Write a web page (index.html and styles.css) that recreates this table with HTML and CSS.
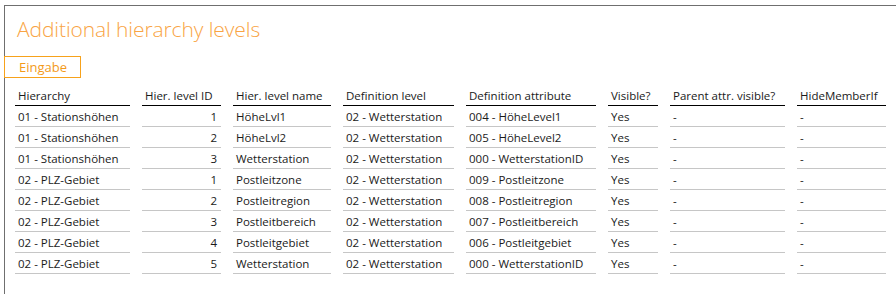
FILE: index.html
```html
<!DOCTYPE html>
<html>
<head>
<meta charset="utf-8">
<link rel="stylesheet" href="styles.css">
</head>
<body>
<div class="panel">
  <h1 class="title">Additional hierarchy levels</h1>
  <div class="tabs"><span class="tab">Eingabe</span></div>
  <div class="grid">
    <div class="th">Hierarchy</div><div class="th">Hier. level ID</div><div class="th">Hier. level name</div><div class="th">Definition level</div><div class="th">Definition attribute</div><div class="th">Visible?</div><div class="th">Parent attr. visible?</div><div class="th">HideMemberIf</div>

    <div class="td">01 - Stationshöhen</div><div class="td num">1</div><div class="td">HöheLvl1</div><div class="td">02 - Wetterstation</div><div class="td">004 - HöheLevel1</div><div class="td">Yes</div><div class="td">-</div><div class="td">-</div>
    <div class="td">01 - Stationshöhen</div><div class="td num">2</div><div class="td">HöheLvl2</div><div class="td">02 - Wetterstation</div><div class="td">005 - HöheLevel2</div><div class="td">Yes</div><div class="td">-</div><div class="td">-</div>
    <div class="td">01 - Stationshöhen</div><div class="td num">3</div><div class="td">Wetterstation</div><div class="td">02 - Wetterstation</div><div class="td">000 - WetterstationID</div><div class="td">Yes</div><div class="td">-</div><div class="td">-</div>
    <div class="td">02 - PLZ-Gebiet</div><div class="td num">1</div><div class="td">Postleitzone</div><div class="td">02 - Wetterstation</div><div class="td">009 - Postleitzone</div><div class="td">Yes</div><div class="td">-</div><div class="td">-</div>
    <div class="td">02 - PLZ-Gebiet</div><div class="td num">2</div><div class="td">Postleitregion</div><div class="td">02 - Wetterstation</div><div class="td">008 - Postleitregion</div><div class="td">Yes</div><div class="td">-</div><div class="td">-</div>
    <div class="td">02 - PLZ-Gebiet</div><div class="td num">3</div><div class="td">Postleitbereich</div><div class="td">02 - Wetterstation</div><div class="td">007 - Postleitbereich</div><div class="td">Yes</div><div class="td">-</div><div class="td">-</div>
    <div class="td">02 - PLZ-Gebiet</div><div class="td num">4</div><div class="td">Postleitgebiet</div><div class="td">02 - Wetterstation</div><div class="td">006 - Postleitgebiet</div><div class="td">Yes</div><div class="td">-</div><div class="td">-</div>
    <div class="td">02 - PLZ-Gebiet</div><div class="td num">5</div><div class="td">Wetterstation</div><div class="td">02 - Wetterstation</div><div class="td">000 - WetterstationID</div><div class="td">Yes</div><div class="td">-</div><div class="td">-</div>
  </div>
</div>
</body>
</html>
```

FILE: styles.css
```css
html, body {
  margin: 0;
  padding: 0;
  background: #ffffff;
}
body {
  padding: 5px 0 0 4px;
  height: 294px;
  box-sizing: border-box;
  overflow: hidden;
  font-family: "Segoe UI", "Open Sans", "Noto Sans", sans-serif;
}
.panel {
  border-top: 1px solid #6f6f6f;
  border-left: 1px solid #6f6f6f;
  height: 300px;
  box-sizing: border-box;
}
.title {
  margin: 0;
  padding: 9px 0 0 12px;
  font-size: 21px;
  line-height: 28px;
  font-weight: 300;
  color: #f9a444;
  letter-spacing: -0.1px;
}
.tabs {
  margin-top: 13px;
  margin-left: -1px;
  display: flex;
}
.tab {
  display: inline-block;
  border: 1px solid #f7a21b;
  color: #f39a1a;
  font-size: 13px;
  line-height: 20px;
  padding: 0 12px 0 14px;
  width: 49px;
}
.grid {
  display: grid;
  grid-template-columns: 115px 79px 98px 111px 130px 50px 115px 89px;
  column-gap: 12px;
  margin: 7px 0 0 10px;
  font-size: 11.5px;
  color: #1a1a1a;
}
.th, .td {
  height: 20px;
  line-height: 21px;
  padding: 0 3px;
  white-space: nowrap;
  overflow: hidden;
}
.th {
  border-bottom: 1px solid #000000;
}
.td {
  border-bottom: 1px solid #c6c6c6;
}
.num {
  text-align: right;
  padding-right: 4px;
}
```
